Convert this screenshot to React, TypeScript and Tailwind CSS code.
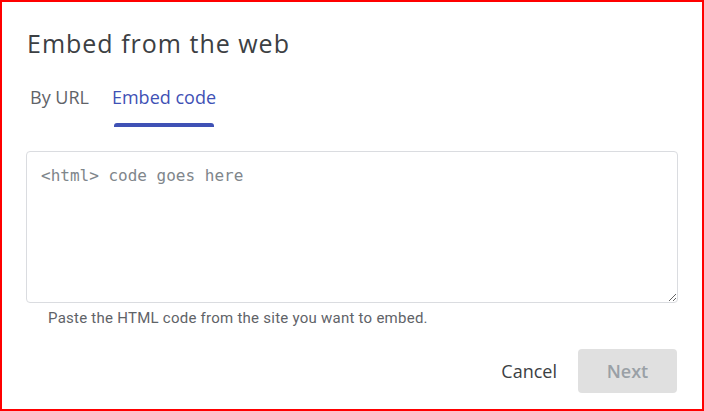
import React from "react";

export default function App() {
  return (
    <div className="w-[704px] h-[411px] border-2 border-[#ff0000] bg-white font-['Open_Sans',sans-serif]">
      <div className="pl-[24px] pr-[25px]">
        <h1 className="pt-[25px] pl-[1px] text-[25px] leading-[32px] tracking-[1px] text-[#3c4043]">Embed from the web</h1>

        {/* tabs */}
        <div className="mt-[26px] flex gap-[23px] pl-[4px]">
          <button className="pb-[18px] text-[18px] font-medium leading-[24px] text-[#5f6368]">
            By URL
          </button>
          <button className="relative pb-[18px] text-[18px] font-medium leading-[24px] text-[#3f51b5]">
            Embed code
            <span className="absolute bottom-0 left-[2px] right-[2px] h-[4px] rounded-t-[3px] bg-[#3f51b5]"></span>
          </button>
        </div>

        <textarea
          placeholder="<html> code goes here"
          className="mt-[24px] block w-[652px] h-[152px] rounded-[4px] border border-[#dadce0] px-[14px] py-[13px] font-['DejaVu_Sans_Mono',monospace] text-[16px] leading-[22px] placeholder:text-[#80868b] outline-none"
        />

        <p className="mt-[5px] pl-[22px] font-['Roboto',sans-serif] text-[15px] leading-[20px] tracking-[0.25px] text-[#5f6368]">
          Paste the HTML code from the site you want to embed.
        </p>

        <div className="mt-[21px] flex justify-end items-center gap-[21px]">
          <button className="text-[18px] font-medium text-[#3c4043]">Cancel</button>
          <button className="w-[99px] h-[44px] rounded-[4px] bg-[#e0e0e0] text-[18px] font-semibold text-[#9aa0a6]">
            Next
          </button>
        </div>
      </div>
    </div>
  );
}
